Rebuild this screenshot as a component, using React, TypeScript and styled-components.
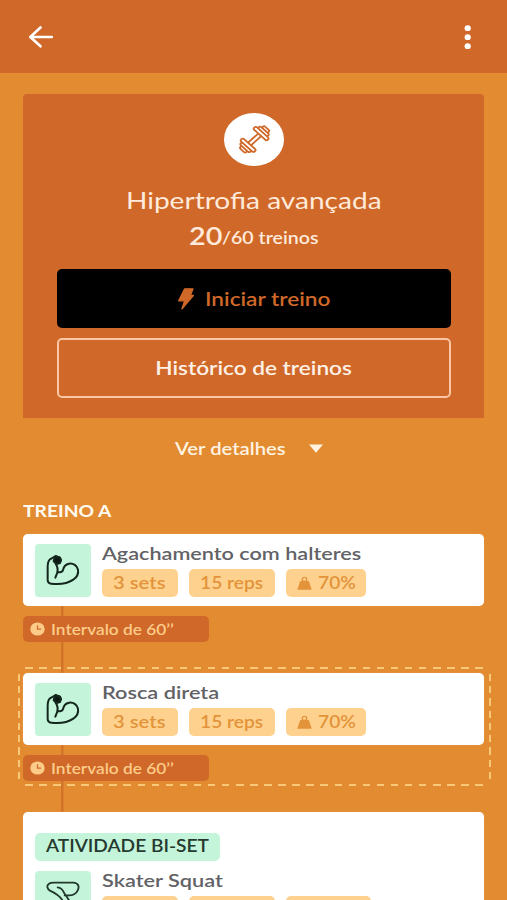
import React from 'react';
import styled, { createGlobalStyle } from 'styled-components';

const c = {
  bg: '#e28b30',
  dark: '#cf6828',
  cream: '#ffeadb',
  sand: '#fed28e',
  amber: '#e3933a',
  mint: '#c4f4d9',
};

const GlobalStyle = createGlobalStyle`
  * { box-sizing: border-box; }
  body { margin: 0; background: ${c.bg}; font-family: Lato, sans-serif; }
`;

const Screen = styled.div`
  width: 507px;
  height: 900px;
  overflow: hidden;
  background: ${c.bg};
`;

const TopBar = styled.header`
  height: 73px;
  padding: 0 35px 0 28px;
  display: flex;
  align-items: center;
  justify-content: space-between;
  background: ${c.dark};
`;

const IconButton = styled.button`
  display: flex;
  padding: 0;
  border: 0;
  background: none;
  color: #fff;
`;

const Content = styled.main`
  padding: 21px 22.6px 0 23.4px;
`;

/* Wide lettering: the glyphs are stretched horizontally by $wide. */
const Wide = styled.span<{ $wide: number; $origin?: string }>`
  display: inline-block;
  white-space: nowrap;
  transform: scaleX(${(p) => p.$wide});
  transform-origin: ${(p) => p.$origin ?? 'left'} center;
`;

const Hero = styled.section`
  height: 324px;
  padding: 19px 33.5px 0;
  display: flex;
  flex-direction: column;
  align-items: center;
  background: ${c.dark};
  border-radius: 4px 4px 0 0;
`;

const Emblem = styled.div`
  width: 60px;
  height: 53px;
  display: flex;
  border-radius: 50%;
  background: #fff;
`;

const HeroTitle = styled.h1`
  margin: 21px 0 0;
  font-size: 23px;
  font-weight: 400;
  line-height: 26px;
  color: ${c.cream};
`;

const Progress = styled.div`
  width: 394px;
  height: 34px;
  margin-top: 9px;
  padding-left: 132px;
  display: flex;
  line-height: 28px;
  color: ${c.cream};
`;

const Done = styled.strong`
  width: 33px;
  font-size: 24px;
  font-weight: 600;
`;

const Total = styled.span`
  font-size: 17px;
  font-weight: 600;
  line-height: 32px;
`;

const ActionButton = styled.button<{ $solid?: boolean }>`
  width: 394px;
  height: ${(p) => (p.$solid ? 59 : 60)}px;
  flex: none;
  margin-top: ${(p) => (p.$solid ? 13 : 10)}px;
  padding: 0;
  display: flex;
  align-items: center;
  justify-content: ${(p) => (p.$solid ? 'flex-start' : 'center')};
  border: ${(p) => (p.$solid ? '0' : '2px solid #fbc6a3')};
  border-radius: 5px;
  background: ${(p) => (p.$solid ? '#000' : 'transparent')};
  color: ${(p) => (p.$solid ? c.dark : '#fff0e6')};
  font: 600 19px/24px Lato, sans-serif;
`;

const BoltSlot = styled.span`
  display: flex;
  margin: 0 11px 0 121px;
`;

const Details = styled.button`
  width: 100%;
  height: 61px;
  padding: 0 0 0 152px;
  display: flex;
  align-items: center;
  border: 0;
  background: none;
  color: #fff3e2;
  font: 600 17px/20px Lato, sans-serif;
`;

const DetailsText = styled.span`
  width: 133.5px;
  text-align: left;
`;

const SectionTitle = styled.h2`
  margin: 20px 0 0;
  font-size: 17.5px;
  font-weight: 700;
  line-height: 24px;
  color: #fffaf0;
`;

const Timeline = styled.div`
  margin-top: 11px;
  display: flex;
  flex-direction: column;
  background: linear-gradient(#d27427, #d27427) 38px 0 / 2.5px 290px no-repeat;
`;

const dashX = 'repeating-linear-gradient(90deg, #f8c878 0 7.5px, transparent 7.5px 14.07px)';
const dashY = 'repeating-linear-gradient(180deg, #f8c878 0 7.2px, transparent 7.2px 12.25px)';

const Step = styled.article<{ $dashed?: boolean }>`
  position: relative;
  height: 139px;
  ${(p) =>
    p.$dashed &&
    `&::before {
      content: '';
      position: absolute;
      inset: -6px -6.5px auto -5.5px;
      height: 119px;
      pointer-events: none;
      background:
        ${dashX} 7.5px 0 / 460px 2px no-repeat,
        ${dashX} 7.5px 100% / 460px 2px no-repeat,
        ${dashY} 0 7px / 2px 106px no-repeat,
        ${dashY} 100% 7px / 2px 106px no-repeat;
    }`}
`;

const Card = styled.div<{ $tall?: boolean }>`
  height: ${(p) => (p.$tall ? 180 : 72)}px;
  padding: ${(p) => (p.$tall ? '21px 11.5px 0' : '10px 11.5px 0')};
  border-radius: 5px;
  background: #fff;
  box-shadow: 0 0 1px #f5c48f;
`;

const BadgeLabel = styled.div`
  width: 185.5px;
  height: 28px;
  margin-bottom: 10px;
  padding-left: 11.5px;
  border-radius: 5px;
  background: ${c.mint};
  color: #25392f;
  font-size: 17px;
  font-weight: 600;
  line-height: 25px;
`;

const Exercise = styled.div`
  display: flex;
  gap: 11px;
`;

const Tile = styled.div`
  width: 56px;
  height: 53px;
  display: flex;
  border-radius: 4px;
  background: ${c.mint};
`;

const Info = styled.div`
  display: flex;
  flex-direction: column;
`;

const Name = styled.h3`
  height: 25px;
  margin: 0;
  font-size: 17.5px;
  font-weight: 600;
  line-height: 19px;
  color: #626266;
`;

const Pills = styled.div`
  display: flex;
  gap: 11px;
`;

const Pill = styled.span<{ $w: number }>`
  width: ${(p) => p.$w}px;
  height: 28px;
  padding: 0 0 1px 11px;
  display: flex;
  align-items: center;
  gap: 6px;
  border-radius: 5px;
  background: ${c.sand};
  color: ${c.amber};
  font-size: 17px;
  font-weight: 600;
  line-height: 25px;
`;

const Rest = styled.div`
  width: 186px;
  height: 26px;
  margin-top: 10px;
  padding-left: 6.5px;
  display: flex;
  align-items: center;
  gap: 6.5px;
  border-radius: 5px;
  background: ${c.dark};
  color: #fdcb88;
  font-size: 14.5px;
  font-weight: 600;
  line-height: 18px;
`;

const RestText = styled.span`
  padding-top: 1px;
`;

const BackIcon = () => (
  <svg width="26" height="22" viewBox="0 0 26 22" fill="none" stroke="currentColor" strokeWidth="2.6" strokeLinecap="round" strokeLinejoin="round">
    <path d="M12.5 1.5 2.3 11l10.2 9.3M2.5 11H23.8" />
  </svg>
);

const MenuIcon = () => (
  <svg width="9" height="26" viewBox="0 0 9 26" fill="currentColor">
    <ellipse cx="4.7" cy="4.2" rx="3.1" ry="2.9" />
    <ellipse cx="4.7" cy="13.2" rx="3.1" ry="2.9" />
    <ellipse cx="4.7" cy="22.2" rx="3.1" ry="2.9" />
  </svg>
);

const DumbbellIcon = () => (
  <svg width="60" height="53" viewBox="0 0 60 53" fill="#fff" stroke={c.dark} strokeWidth="1.6" strokeLinejoin="round">
    <g transform="translate(30.6 26.4) scale(1.15 1.03) rotate(-45)">
      <rect x="-7" y="-1.8" width="14" height="3.6" />
      <rect x="12.2" y="-3.6" width="3" height="7.2" rx="1.4" />
      <rect x="9.4" y="-5.8" width="3.1" height="11.6" rx="1.5" />
      <rect x="6.3" y="-8.3" width="3.4" height="16.6" rx="1.6" />
      <rect x="-15.2" y="-3.6" width="3" height="7.2" rx="1.4" />
      <rect x="-12.5" y="-5.8" width="3.1" height="11.6" rx="1.5" />
      <rect x="-9.7" y="-8.3" width="3.4" height="16.6" rx="1.6" />
    </g>
  </svg>
);

const BoltIcon = () => (
  <svg width="16" height="22" viewBox="385 325 48 65" fill="currentColor" stroke="currentColor" strokeWidth="4" strokeLinejoin="round">
    <path d="M405 327h25l-8 20h9l-34 40 8-24h-18z" />
  </svg>
);

const CaretIcon = () => (
  <svg width="14" height="9" viewBox="0 0 14 9" fill="currentColor">
    <path d="M0 .5h14L7 8.7z" />
  </svg>
);

const ClockIcon = () => (
  <svg width="15" height="14" viewBox="0 0 15 14">
    <ellipse cx="7.5" cy="7" rx="7.2" ry="6.6" fill="currentColor" />
    <path d="M7.5 3.2V7.2H11" fill="none" stroke={c.dark} strokeWidth="1.2" />
  </svg>
);

const WeightIcon = () => (
  <svg width="15" height="14" viewBox="0 0 15 14" fill="currentColor">
    <path d="M3.9 5h7.2c.5 0 .8.2 1 .7l2.4 7.2c.2.6-.1.9-.8.9H1.3c-.7 0-1-.3-.8-.9l2.4-7.2c.2-.5.5-.7 1-.7z" />
    <ellipse cx="7.5" cy="3.4" rx="2.3" ry="2.1" fill="none" stroke="currentColor" strokeWidth="1.3" />
  </svg>
);

const ArmIcon = () => (
  <svg width="56" height="53" viewBox="60 162 168 159" fill="none" stroke="#14271e" strokeWidth="6" strokeLinecap="round" strokeLinejoin="round">
    <path d="M122 198 105 208C99 213 98 222 98 232V269C98 277 101 280 109 281C134 284 160 279 175 269C187 261 191 251 189 239C186 227 175 219 162 221C152 223 146 230 144 240C143 246 134 248 128 246" />
    <path d="M122 221C128 230 129 239 127 248L121 263M122 198 135 203 138 212" />
    <path d="M119 201 133 202 138 210 135 219 125 222 116 214z" fill="#0c1812" />
  </svg>
);

const LegIcon = () => (
  <svg width="56" height="53" viewBox="75 211 168 159" fill="none" stroke="#22382d" strokeWidth="5.5" strokeLinecap="round" strokeLinejoin="round">
    <path d="M165 320 158 300C151 288 133 276 120 270C111 264 109 254 117 249C121 246 126 246 132 246H190C205 247 209 258 203 269C199 279 187 284 178 284H164M143 260C154 261 158 267 162 276L186 312" />
  </svg>
);

type PillData = { text: string; w: number; wide: number; weight?: boolean };

const basePills: PillData[] = [
  { text: '3 sets', w: 76, wide: 1.19 },
  { text: '15 reps', w: 86, wide: 1.13 },
  { text: '70%', w: 80.5, wide: 1.13, weight: true },
];

const wideLoad = basePills.map((p) => (p.weight ? { ...p, w: 85 } : p));

function ExerciseRow({ name, wide, icon, pills = basePills }: { name: string; wide: number; icon: React.ReactNode; pills?: PillData[] }) {
  return (
    <Exercise>
      <Tile>{icon}</Tile>
      <Info>
        <Name><Wide $wide={wide}>{name}</Wide></Name>
        <Pills>
          {pills.map((p) => (
            <Pill key={p.text} $w={p.w}>
              {p.weight && <WeightIcon />}
              <Wide $wide={p.wide}>{p.text}</Wide>
            </Pill>
          ))}
        </Pills>
      </Info>
    </Exercise>
  );
}

const Interval = () => (
  <Rest>
    <ClockIcon />
    <RestText><Wide $wide={1.19}>Intervalo de 60’’</Wide></RestText>
  </Rest>
);

export default function App() {
  return (
    <Screen>
      <GlobalStyle />
      <TopBar>
        <IconButton aria-label="Voltar"><BackIcon /></IconButton>
        <IconButton aria-label="Menu"><MenuIcon /></IconButton>
      </TopBar>
      <Content>
        <Hero>
          <Emblem><DumbbellIcon /></Emblem>
          <HeroTitle><Wide $wide={1.22} $origin="center">Hipertrofia avançada</Wide></HeroTitle>
          <Progress>
            <Done><Wide $wide={1.2}>20</Wide></Done>
            <Total><Wide $wide={1.15}>/60 treinos</Wide></Total>
          </Progress>
          <ActionButton $solid>
            <BoltSlot><BoltIcon /></BoltSlot>
            <Wide $wide={1.19}>Iniciar treino</Wide>
          </ActionButton>
          <ActionButton>
            <Wide $wide={1.19} $origin="center">Histórico de treinos</Wide>
          </ActionButton>
        </Hero>
        <Details>
          <DetailsText><Wide $wide={1.19}>Ver detalhes</Wide></DetailsText>
          <CaretIcon />
        </Details>
        <SectionTitle><Wide $wide={1.1}>TREINO A</Wide></SectionTitle>
        <Timeline>
          <Step>
            <Card><ExerciseRow name="Agachamento com halteres" wide={1.235} icon={<ArmIcon />} /></Card>
            <Interval />
          </Step>
          <Step $dashed>
            <Card><ExerciseRow name="Rosca direta" wide={1.24} icon={<ArmIcon />} /></Card>
            <Interval />
          </Step>
          <Card $tall>
            <BadgeLabel><Wide $wide={1.125}>ATIVIDADE BI-SET</Wide></BadgeLabel>
            <ExerciseRow name="Skater Squat" wide={1.24} icon={<LegIcon />} pills={wideLoad} />
          </Card>
        </Timeline>
      </Content>
    </Screen>
  );
}
